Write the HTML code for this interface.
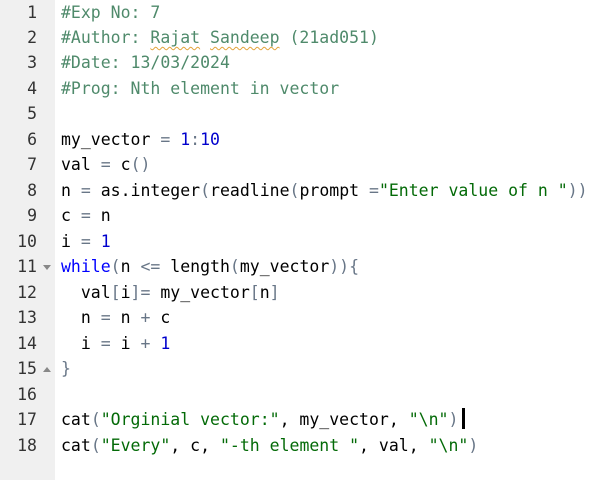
<!DOCTYPE html><html><head><style>
body{margin:0;width:607px;height:480px;background:#fff;overflow:hidden;position:relative;font-family:"DejaVu Sans Mono","Liberation Mono",monospace;font-size:16.5px}
#g{position:absolute;left:0;top:0;width:55px;height:480px;background:#f0f0f0}
.l{position:absolute;height:25px;line-height:25px;white-space:pre}
.n{left:0;width:37px;text-align:right;color:#333}
.c{left:61px;color:#000}
.cm{color:#4f8a6b}.k{color:#0000ff}.d{color:#0000cd}.s{color:#036a07}.o{color:#687687}.p{color:#687687}
.w{text-decoration:underline wavy #e3a33a;text-decoration-thickness:1px;text-underline-offset:3px}
.f{position:absolute;left:43px;width:0;height:0;border-left:4px solid transparent;border-right:4px solid transparent}
</style></head><body>
<div id="g"></div>
<div class="l n" style="top:0px">1</div><div class="l c" style="top:0px"><span class="cm">#Exp No: 7</span></div>
<div class="l n" style="top:25px">2</div><div class="l c" style="top:25px"><span class="cm">#Author: <span class="w">Rajat</span> <span class="w">Sandeep</span> (21ad051)</span></div>
<div class="l n" style="top:50px">3</div><div class="l c" style="top:50px"><span class="cm">#Date: 13/03/2024</span></div>
<div class="l n" style="top:76px">4</div><div class="l c" style="top:76px"><span class="cm">#Prog: Nth element in vector</span></div>
<div class="l n" style="top:101px">5</div>
<div class="l n" style="top:127px">6</div><div class="l c" style="top:127px">my_vector <span class="o">=</span> <span class="d">1</span><span class="o">:</span><span class="d">10</span></div>
<div class="l n" style="top:152px">7</div><div class="l c" style="top:152px">val <span class="o">=</span> c<span class="p">()</span></div>
<div class="l n" style="top:178px">8</div><div class="l c" style="top:178px">n <span class="o">=</span> as.integer<span class="p">(</span>readline<span class="p">(</span>prompt <span class="o">=</span><span class="s">"Enter value of n "</span><span class="p">))</span></div>
<div class="l n" style="top:203px">9</div><div class="l c" style="top:203px">c <span class="o">=</span> n</div>
<div class="l n" style="top:229px">10</div><div class="l c" style="top:229px">i <span class="o">=</span> <span class="d">1</span></div>
<div class="l n" style="top:254px">11</div><div class="f" style="top:265px;border-top:5px solid #888"></div><div class="l c" style="top:254px"><span class="k">while</span><span class="p">(</span>n <span class="o">&lt;=</span> length<span class="p">(</span>my_vector<span class="p">)){</span></div>
<div class="l n" style="top:280px">12</div><div class="l c" style="top:280px">  val<span class="p">[</span>i<span class="p">]</span><span class="o">=</span> my_vector<span class="p">[</span>n<span class="p">]</span></div>
<div class="l n" style="top:305px">13</div><div class="l c" style="top:305px">  n <span class="o">=</span> n <span class="o">+</span> c</div>
<div class="l n" style="top:331px">14</div><div class="l c" style="top:331px">  i <span class="o">=</span> i <span class="o">+</span> <span class="d">1</span></div>
<div class="l n" style="top:356px">15</div><div class="f" style="top:367px;border-bottom:5px solid #888"></div><div class="l c" style="top:356px"><span class="p">}</span></div>
<div class="l n" style="top:382px">16</div>
<div class="l n" style="top:407px">17</div><div class="l c" style="top:407px">cat<span class="p">(</span><span class="s">"Orginial vector:"</span>, my_vector, <span class="s">"\n"</span><span class="p">)</span></div>
<div style="position:absolute;left:462px;top:408px;width:3px;height:21px;background:#000"></div>
<div class="l n" style="top:433px">18</div><div class="l c" style="top:433px">cat<span class="p">(</span><span class="s">"Every"</span>, c, <span class="s">"-th element "</span>, val, <span class="s">"\n"</span><span class="p">)</span></div>
</body></html>
